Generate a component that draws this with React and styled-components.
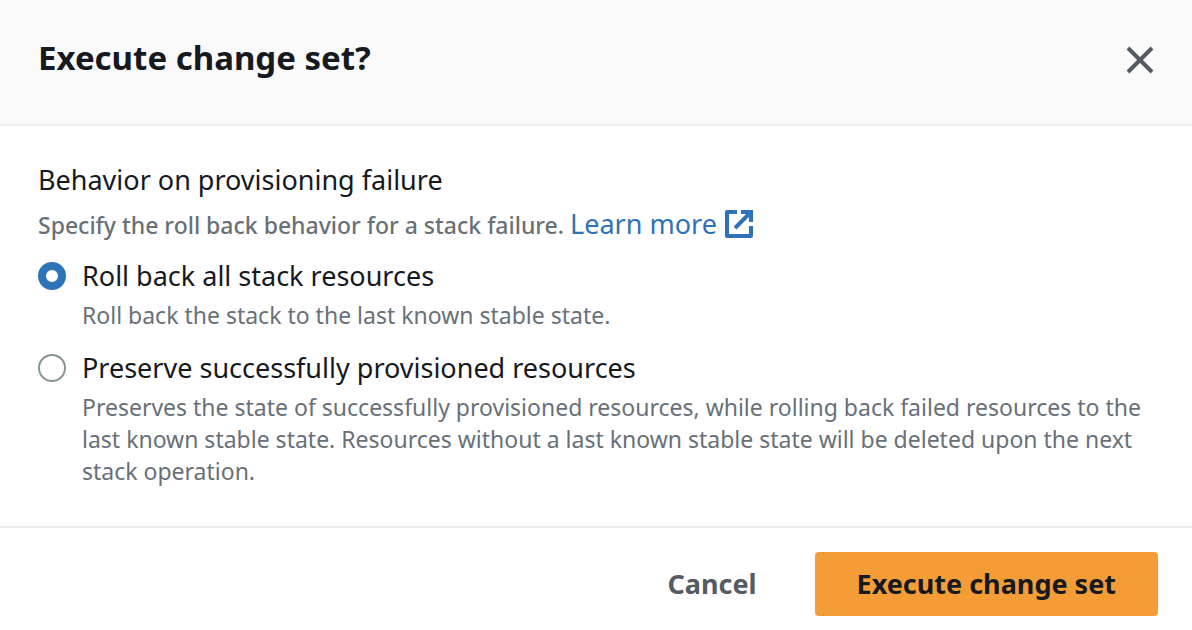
import React from "react";
import styled, { createGlobalStyle } from "styled-components";

const GlobalStyle = createGlobalStyle`
  * { box-sizing: border-box; }
  body {
    margin: 0;
    background: #ffffff;
    color: #16191f;
    font-family: "Noto Sans", "Open Sans", sans-serif;
  }
`;

const Dialog = styled.div`
  width: 100%;
  background: #ffffff;
`;

const Header = styled.header`
  display: flex;
  align-items: flex-start;
  justify-content: space-between;
  padding: 36px 36px 40px 38px;
  background: #fafafa;
  border-bottom: 2px solid #ebebeb;
`;

const Title = styled.h1`
  margin: 0;
  font-size: 33px;
  line-height: 44px;
  font-weight: 700;
`;

const CloseButton = styled.button`
  display: flex;
  align-items: center;
  height: 48px;
  padding: 0;
  border: 0;
  background: none;
  color: #545b64;
  cursor: pointer;
`;

const Content = styled.fieldset`
  margin: 0;
  padding: 34px 38px 39px;
  border: 0;
  min-width: 0;
`;

const Legend = styled.legend`
  float: left;
  width: 100%;
  padding: 0;
  font-size: 27px;
  line-height: 40px;
`;

const Hint = styled.p`
  clear: both;
  margin: 0;
  padding-top: 4px;
  font-size: 23px;
  font-weight: 500;
  line-height: 40px;
  color: #687078;
`;

const InfoLink = styled.a`
  display: inline-flex;
  align-items: center;
  gap: 6px;
  margin-left: 6px;
  font-size: 27px;
  font-weight: 400;
  color: #2e73b8;
  text-decoration: none;
`;

const Options = styled.div`
  display: flex;
  flex-direction: column;
  gap: 18px;
  padding-top: 12px;
`;

const Option = styled.div`
  display: grid;
  grid-template-columns: 28px minmax(0, 1fr);
  column-gap: 16px;
  align-items: center;
`;

const Radio = styled.input`
  appearance: none;
  width: 28px;
  height: 28px;
  margin: 0;
  border: 2px solid #879596;
  border-radius: 50%;
  background: #ffffff;

  &:checked {
    border: 8px solid #2e73b8;
  }
`;

const OptionLabel = styled.label`
  font-size: 27px;
  line-height: 38px;
`;

const Description = styled.p`
  grid-column: 2;
  margin: 0;
  padding-top: 4px;
  font-size: 23px;
  line-height: 32px;
  color: #687078;
`;

const Footer = styled.footer`
  display: flex;
  justify-content: flex-end;
  gap: 16px;
  padding: 24px 34px 14px;
  border-top: 2px solid #ebebeb;
`;

const Button = styled.button`
  height: 64px;
  padding: 0 42px 2px;
  border: 0;
  border-radius: 4px;
  background: ${({ $primary }) => ($primary ? "#f49d37" : "transparent")};
  color: ${({ $primary }) => ($primary ? "#16191f" : "#545b64")};
  font-family: inherit;
  font-size: 27px;
  font-weight: 700;
  cursor: pointer;
`;

export default function App() {
  return (
    <>
      <GlobalStyle />
      <Dialog role="dialog" aria-labelledby="title">
        <Header>
          <Title id="title">Execute change set?</Title>
          <CloseButton type="button" aria-label="Close">
            <svg width="32" height="32" viewBox="0 0 32 32" fill="none" stroke="currentColor" strokeWidth="4">
              <path d="M4 4L28 28M28 4L4 28" />
            </svg>
          </CloseButton>
        </Header>
        <Content>
          <Legend>Behavior on provisioning failure</Legend>
          <Hint>
            Specify the roll back behavior for a stack failure.
            <InfoLink href="#">
              Learn more
              <svg width="32" height="32" viewBox="0 0 32 32" fill="none" stroke="currentColor" strokeWidth="4">
                <path strokeLinejoin="round" d="M14 4H4V28H28V18" />
                <path d="M18 4H28V14M28 4L12 20" />
              </svg>
            </InfoLink>
          </Hint>
          <Options>
            <Option>
              <Radio type="radio" name="behavior" id="rollback" defaultChecked />
              <OptionLabel htmlFor="rollback">Roll back all stack resources</OptionLabel>
              <Description>Roll back the stack to the last known stable state.</Description>
            </Option>
            <Option>
              <Radio type="radio" name="behavior" id="preserve" />
              <OptionLabel htmlFor="preserve">Preserve successfully provisioned resources</OptionLabel>
              <Description>
                Preserves the state of successfully provisioned resources, while rolling back failed resources to the
                last known stable state. Resources without a last known stable state will be deleted upon the next
                stack operation.
              </Description>
            </Option>
          </Options>
        </Content>
        <Footer>
          <Button type="button">Cancel</Button>
          <Button type="button" $primary>Execute change set</Button>
        </Footer>
      </Dialog>
    </>
  );
}
